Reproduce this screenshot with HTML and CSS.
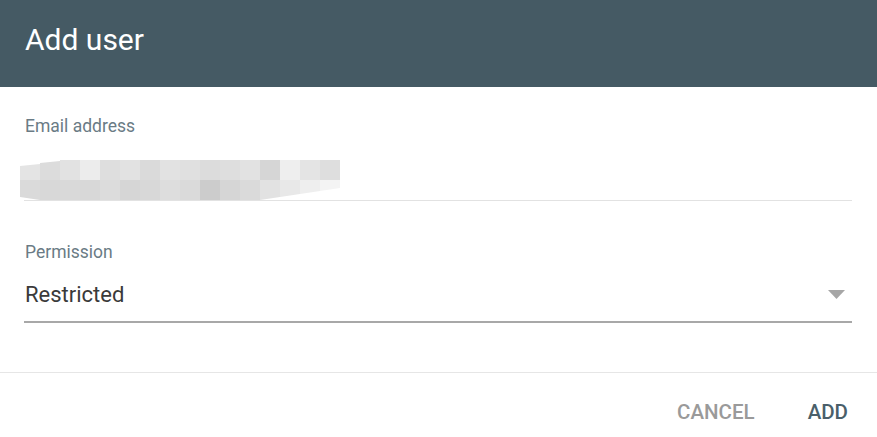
FILE: index.html
```html
<!DOCTYPE html>
<html>
<head>
<meta charset="utf-8">
<link rel="stylesheet" href="styles.css">
</head>
<body>
<div class="dialog">
  <header class="dialog-header">
    <h1 class="dialog-title">Add user</h1>
  </header>
  <main class="dialog-body">
    <div class="field field-email">
      <label class="field-label">Email address</label>
      <div class="field-input">
        <div class="masked">
          <div class="mask-row mask-top">
            <span></span><span></span><span></span><span></span><span></span><span></span><span></span><span></span>
            <span></span><span></span><span></span><span></span><span></span><span></span><span></span><span></span>
          </div>
          <div class="mask-row mask-bottom">
            <span></span><span></span><span></span><span></span><span></span><span></span><span></span><span></span>
            <span></span><span></span><span></span><span></span><span></span><span></span><span></span><span></span>
          </div>
        </div>
      </div>
    </div>
    <div class="field field-select">
      <label class="field-label">Permission</label>
      <div class="field-input select-input">
        <span class="select-value">Restricted</span>
        <svg class="select-arrow" width="17" height="9" viewBox="0 0 17 9"><path d="M0 0 H17 L8.5 9 Z" fill="#a6a6a6"/></svg>
      </div>
    </div>
  </main>
  <footer class="dialog-actions">
    <button class="btn btn-cancel">CANCEL</button>
    <button class="btn btn-add">ADD</button>
  </footer>
</div>
</body>
</html>
```
FILE: styles.css
```css
* { box-sizing: border-box; }
html, body { margin: 0; padding: 0; background: #fff; }
body { font-family: Roboto, "Noto Sans", "Liberation Sans", sans-serif; width: 877px; height: 437px; overflow: hidden; }

.dialog { display: flex; flex-direction: column; }

.dialog-header {
  height: 87px;
  background: #455a64;
  padding: 0 25px;
  display: flex;
  align-items: center;
}
.dialog-title {
  margin: 0;
  font-size: 30px;
  font-weight: 400;
  color: #fff;
  line-height: 1;
  padding-bottom: 8px;
}

.dialog-body { padding: 0 25px 0 24px; }

.field-label {
  display: block;
  font-size: 17.5px;
  color: #6a7b85;
  line-height: 20px;
  padding-left: 1px;
}
.field-email { padding-top: 29px; }
.field-email .field-input {
  margin-top: 24px;
  height: 41px;
  border-bottom: 1px solid #e2e2e2;
  position: relative;
}
.masked {
  position: absolute;
  left: -4px;
  top: 0;
  width: 320px;
  height: 40px;
  display: flex;
  flex-direction: column;
}
.mask-row { display: flex; height: 20px; }
.mask-row span { width: 20px; height: 20px; background: #dedede; }
.mask-top span:nth-child(1) { background: #e4e4e4; clip-path: polygon(0 30%, 100% 20%, 100% 100%, 0 100%); }
.mask-top span:nth-child(2) { background: #dcdcdc; clip-path: polygon(0 15%, 100% 5%, 100% 100%, 0 100%); }
.mask-top span:nth-child(3) { background: #e2e2e2; }
.mask-top span:nth-child(4) { background: #ececec; }
.mask-top span:nth-child(5) { background: #dedede; }
.mask-top span:nth-child(6) { background: #e2e2e2; }
.mask-top span:nth-child(7) { background: #dadada; }
.mask-top span:nth-child(8) { background: #e2e2e2; }
.mask-top span:nth-child(9) { background: #e0e0e0; }
.mask-top span:nth-child(10) { background: #dcdcdc; }
.mask-top span:nth-child(11) { background: #dedede; }
.mask-top span:nth-child(12) { background: #e2e2e2; }
.mask-top span:nth-child(13) { background: #d6d6d6; }
.mask-top span:nth-child(14) { background: #eeeeee; }
.mask-top span:nth-child(15) { background: #e4e4e4; }
.mask-top span:nth-child(16) { background: #dedede; }
.mask-bottom span:nth-child(1) { background: #dadada; clip-path: polygon(0 0, 100% 0, 100% 100%, 0 85%); }
.mask-bottom span:nth-child(2) { background: #d8d8d8; }
.mask-bottom span:nth-child(3) { background: #d9d9d9; }
.mask-bottom span:nth-child(4) { background: #d8d8d8; }
.mask-bottom span:nth-child(5) { background: #dcdcdc; }
.mask-bottom span:nth-child(6) { background: #d6d6d6; }
.mask-bottom span:nth-child(7) { background: #d8d8d8; }
.mask-bottom span:nth-child(8) { background: #dddddd; }
.mask-bottom span:nth-child(9) { background: #dadada; }
.mask-bottom span:nth-child(10) { background: #cccccc; }
.mask-bottom span:nth-child(11) { background: #d6d6d6; }
.mask-bottom span:nth-child(12) { background: #dadada; }
.mask-bottom span:nth-child(13) { background: #e2e2e2; clip-path: polygon(0 0, 100% 0, 100% 85%, 0 100%); }
.mask-bottom span:nth-child(14) { background: #e8e8e8; clip-path: polygon(0 0, 100% 0, 100% 70%, 0 85%); }
.mask-bottom span:nth-child(15) { background: #eeeeee; clip-path: polygon(0 0, 100% 0, 100% 55%, 0 70%); }
.mask-bottom span:nth-child(16) { background: #f4f4f4; clip-path: polygon(0 0, 100% 0, 100% 40%, 0 55%); }

.field-select { padding-top: 41px; }
.select-input {
  margin-top: 20px;
  height: 41px;
  border-bottom: 2px solid #a8a8a8;
  display: flex;
  align-items: flex-start;
  justify-content: space-between;
  padding-left: 1px;
}
.select-value {
  font-size: 22px;
  color: #3a3a3a;
  line-height: 26px;
}
.select-arrow { margin-top: 8px; margin-right: 7px; }

.dialog-actions {
  margin-top: 49px;
  border-top: 1px solid #e6e6e6;
  height: 78px;
  display: flex;
  justify-content: flex-end;
  align-items: center;
  gap: 33px;
  padding: 0 19px 0 0;
}
.btn {
  background: none;
  border: none;
  font-family: Roboto, "Noto Sans", "Liberation Sans", sans-serif;
  font-size: 20.5px;
  font-weight: 500;
  padding: 8px 10px;
  line-height: 22px;
  cursor: pointer;
}
.btn-cancel { color: #9a9a9a; }
.btn-add { color: #4a5f6a; }
```
